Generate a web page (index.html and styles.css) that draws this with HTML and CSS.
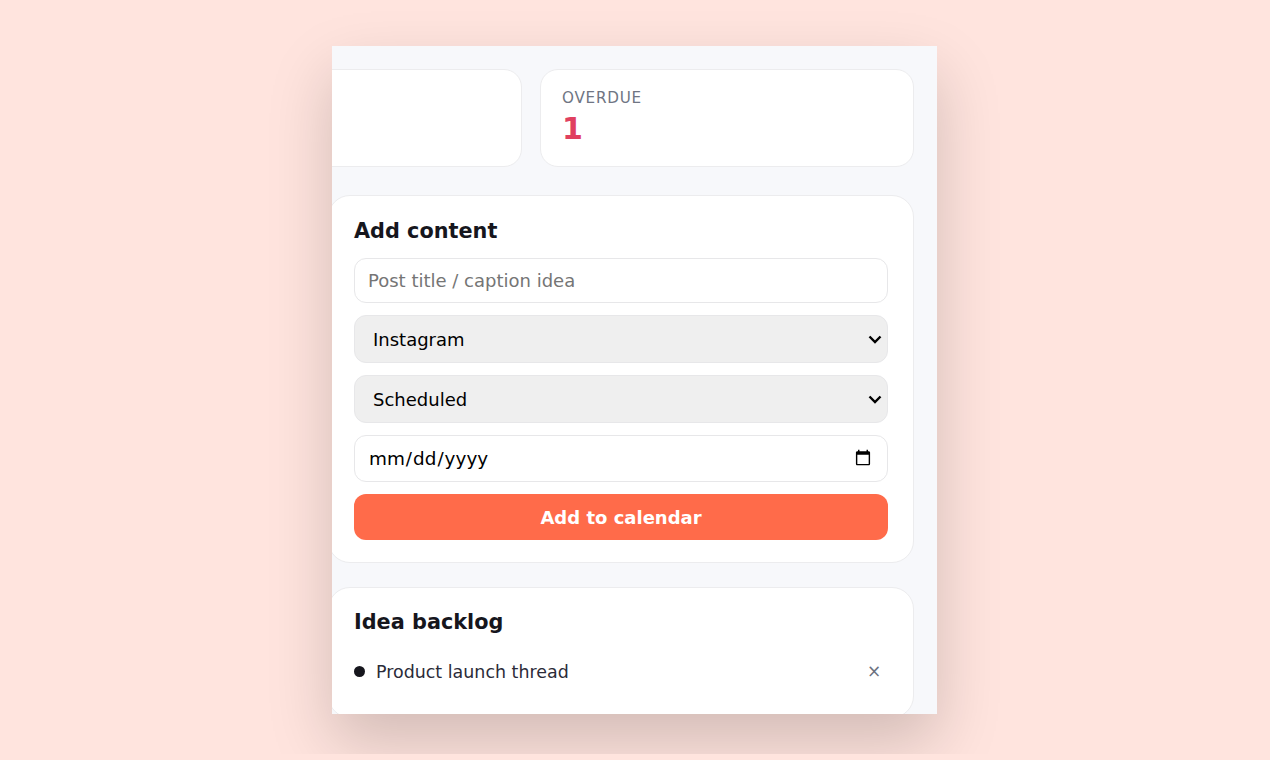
FILE: index.html
```html
<!DOCTYPE html>
<html lang="en">
<head>
    <meta charset="UTF-8">
    <meta name="viewport" content="width=device-width, initial-scale=1.0">
    <link rel="stylesheet" href="styles.css">
    <title>Content calendar</title>
</head>
<body>
<div class="page">
    <div class="frame">
        <div class="stats">
            <div class="stat"></div>
            <div class="stat">
                <div class="stat-label">OVERDUE</div>
                <div class="stat-value">1</div>
            </div>
        </div>
        <div class="card add-card">
            <h2 class="card-title">Add content</h2>
            <form class="add-form">
                <input class="field" type="text" placeholder="Post title / caption idea">
                <select class="field field-select">
                    <option>Instagram</option>
                </select>
                <select class="field field-select">
                    <option>Scheduled</option>
                </select>
                <input class="field field-date" type="date">
                <button class="add-button" type="button">Add to calendar</button>
            </form>
        </div>
        <div class="card">
            <h2 class="card-title">Idea backlog</h2>
            <ul class="idea-list">
                <li class="idea">
                    <span class="idea-dot"></span>
                    <span class="idea-text">Product launch thread</span>
                    <span class="idea-remove">×</span>
                </li>
            </ul>
        </div>
    </div>
</div>
</body>
</html>
```

FILE: styles.css
```css
* {
    box-sizing: border-box;
}

body {
    margin: 0;
    background-color: #ffe4de;
    font-family: "DejaVu Sans", sans-serif;
    color: #16161d;
}

.page {
    height: 754px;
    padding: 46px 1px 0 0;
    overflow: hidden;
    display: flex;
    justify-content: center;
    align-items: flex-start;
}

.frame {
    width: 605px;
    height: 668px;
    padding-top: 23px;
    background-color: #f7f8fb;
    overflow: hidden;
    box-shadow: 0 28px 60px rgba(0, 0, 0, 0.18);
}

.stats {
    display: grid;
    grid-template-columns: 374px 374px;
    gap: 18px;
    margin-left: -184px;
    margin-bottom: 28px;
}

.stat {
    height: 98px;
    padding: 20px 21px;
    background-color: #fff;
    border: 1px solid #ececee;
    border-radius: 18px;
}

.stat-label {
    font-size: 15.2px;
    line-height: 17px;
    letter-spacing: 0.05em;
    color: #6f7583;
}

.stat-value {
    font-size: 30px;
    font-weight: 700;
    line-height: 32px;
    margin-top: 6px;
    color: #e0405f;
}

.card {
    width: 586px;
    margin-left: -4px;
    margin-bottom: 24px;
    padding: 21px 25px 22px;
    background-color: #fff;
    border: 1px solid #ececee;
    border-radius: 22px;
}

.add-card {
    padding-top: 22px;
}

.card-title {
    margin: 0 0 14px;
    font-size: 20.8px;
    line-height: 26px;
    font-weight: 700;
}

.add-form {
    display: flex;
    flex-direction: column;
    gap: 12px;
}

.field {
    width: 100%;
    height: 45px;
    padding: 0 13px;
    background-color: #fff;
    border: 1px solid #e7e7e9;
    border-radius: 12px;
    font-family: inherit;
    font-size: 18px;
    color: #000;
}

.field-select {
    height: 48px;
    padding: 0 18px;
    appearance: none;
    background-color: #efefef;
    background-image: url("data:image/svg+xml,%3Csvg xmlns='http://www.w3.org/2000/svg' width='14' height='9' viewBox='0 0 14 9'%3E%3Cpath d='M1.5 1.5 7 7l5.5-5.5' fill='none' stroke='%23000' stroke-width='2.4'/%3E%3C/svg%3E");
    background-repeat: no-repeat;
    background-position: right 5px center;
}

.field-date {
    height: 47px;
    font-size: 18.4px;
}

.add-button {
    height: 46px;
    background-color: #ff6b4a;
    border: none;
    border-radius: 12px;
    font-family: inherit;
    font-size: 18px;
    font-weight: 700;
    color: #fff;
}

.idea-list {
    list-style: none;
    margin: 0;
    padding: 0;
}

.idea {
    display: flex;
    align-items: center;
    height: 46px;
}

.idea-dot {
    width: 11px;
    height: 11px;
    margin-right: 11px;
    margin-bottom: 2px;
    border-radius: 50%;
    background-color: #16161d;
}

.idea-text {
    flex: 1;
    font-size: 17.45px;
    color: #2b2b38;
}

.idea-remove {
    width: 28px;
    margin-bottom: 2px;
    text-align: center;
    font-size: 17px;
    color: #6b7280;
}
```
